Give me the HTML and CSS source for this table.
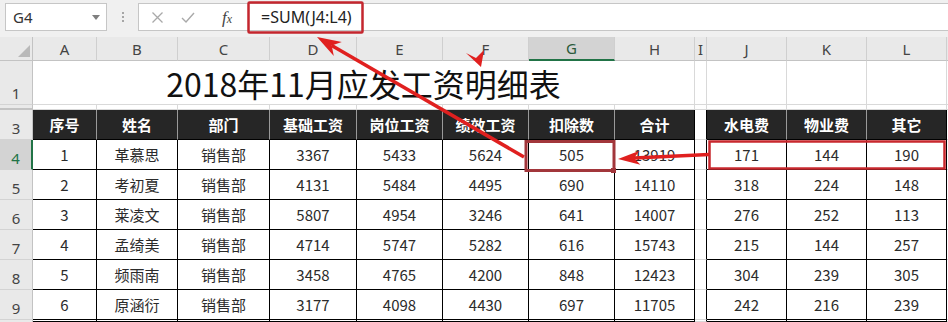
FILE: index.html
```html
<!DOCTYPE html>
<html lang="zh-CN">
<head>
<meta charset="utf-8">
<title>2018年11月应发工资明细表</title>
<link rel="stylesheet" href="styles.css">
</head>
<body>
<div class="toolbar">
  <div class="namebox"><span>G4</span><span class="dd"></span></div>
  <div class="grip"><i></i><i></i><i></i></div>
  <div class="fbar">
    <svg class="ico-x" width="13" height="13" viewBox="0 0 13 13"><path d="M1.5 1.5 L11.5 11.5 M11.5 1.5 L1.5 11.5" stroke="#a9a9a9" stroke-width="1.3" fill="none"/></svg>
    <svg class="ico-ok" width="14" height="11" viewBox="0 0 14 11"><path d="M1 6 L5 10 L13 1" stroke="#a9a9a9" stroke-width="1.4" fill="none"/></svg>
    <span class="fx">f<span class="fxx">x</span></span>
    <span class="formula">=SUM(J4:L4)</span>
  </div>
</div>

<div class="sheet">
  <!-- column headers -->
  <div class="corner"><svg width="14" height="14" viewBox="0 0 14 14"><polygon points="13,1 13,13 1,13" fill="#b9b9b9"/></svg></div>
  <div class="ch">A</div><div class="ch">B</div><div class="ch">C</div><div class="ch">D</div>
  <div class="ch">E</div><div class="ch">F</div><div class="ch sel">G</div><div class="ch">H</div>
  <div class="ch">I</div><div class="ch">J</div><div class="ch">K</div><div class="ch">L</div><div class="ch end"></div>

  <!-- row 1 -->
  <div class="rh">1</div>
  <div class="c title">2018年11月应发工资明细表</div>
  <div class="c"></div><div class="c"></div><div class="c"></div><div class="c"></div><div class="c end"></div>

  <!-- row 2 (hidden) -->
  <div class="rh hid"></div>
  <div class="c"></div><div class="c"></div><div class="c"></div><div class="c"></div><div class="c"></div><div class="c"></div>
  <div class="c"></div><div class="c"></div><div class="c"></div><div class="c"></div><div class="c"></div><div class="c"></div><div class="c end"></div>

  <!-- row 3 -->
  <div class="rh">3</div>
  <div class="th">序号</div><div class="th">姓名</div><div class="th">部门</div><div class="th">基础工资</div>
  <div class="th">岗位工资</div><div class="th">绩效工资</div><div class="th">扣除数</div><div class="th last">合计</div>
  <div class="c gap"></div>
  <div class="th">水电费</div><div class="th">物业费</div><div class="th last">其它</div><div class="c end"></div>

  <!-- row 4 -->
  <div class="rh sel">4</div>
  <div class="td">1</div><div class="td">革慕思</div><div class="td">销售部</div><div class="td">3367</div>
  <div class="td">5433</div><div class="td">5624</div><div class="td">505</div><div class="td">13919</div>
  <div class="c gap"></div>
  <div class="td">171</div><div class="td">144</div><div class="td">190</div><div class="c end"></div>

  <!-- row 5 -->
  <div class="rh">5</div>
  <div class="td">2</div><div class="td">考初夏</div><div class="td">销售部</div><div class="td">4131</div>
  <div class="td">5484</div><div class="td">4495</div><div class="td">690</div><div class="td">14110</div>
  <div class="c gap"></div>
  <div class="td">318</div><div class="td">224</div><div class="td">148</div><div class="c end"></div>

  <!-- row 6 -->
  <div class="rh">6</div>
  <div class="td">3</div><div class="td">莱凌文</div><div class="td">销售部</div><div class="td">5807</div>
  <div class="td">4954</div><div class="td">3246</div><div class="td">641</div><div class="td">14007</div>
  <div class="c gap"></div>
  <div class="td">276</div><div class="td">252</div><div class="td">113</div><div class="c end"></div>

  <!-- row 7 -->
  <div class="rh">7</div>
  <div class="td">4</div><div class="td">孟绮美</div><div class="td">销售部</div><div class="td">4714</div>
  <div class="td">5747</div><div class="td">5282</div><div class="td">616</div><div class="td">15743</div>
  <div class="c gap"></div>
  <div class="td">215</div><div class="td">144</div><div class="td">257</div><div class="c end"></div>

  <!-- row 8 -->
  <div class="rh">8</div>
  <div class="td">5</div><div class="td">频雨南</div><div class="td">销售部</div><div class="td">3458</div>
  <div class="td">4765</div><div class="td">4200</div><div class="td">848</div><div class="td">12423</div>
  <div class="c gap"></div>
  <div class="td">304</div><div class="td">239</div><div class="td">305</div><div class="c end"></div>

  <!-- row 9 -->
  <div class="rh">9</div>
  <div class="td">6</div><div class="td">原涵衍</div><div class="td">销售部</div><div class="td">3177</div>
  <div class="td">4098</div><div class="td">4430</div><div class="td">697</div><div class="td">11705</div>
  <div class="c gap"></div>
  <div class="td">242</div><div class="td">216</div><div class="td">239</div><div class="c end"></div>

  <!-- row 10 (only its top edge is visible) -->
  <div class="rh"></div>
  <div class="td"></div><div class="td"></div><div class="td"></div><div class="td"></div>
  <div class="td"></div><div class="td"></div><div class="td"></div><div class="td"></div>
  <div class="c gap"></div>
  <div class="td"></div><div class="td"></div><div class="td"></div><div class="c end"></div>
</div>

<svg class="overlay" width="948" height="322" viewBox="0 0 948 322">
  <rect x="248.5" y="2.5" width="114" height="30" rx="1" fill="none" stroke="#c4262e" stroke-width="2.5"/>
  <rect x="526" y="141.5" width="88" height="29" fill="none" stroke="#a2363b" stroke-width="3"/>
  <rect x="611" y="168" width="5" height="5" fill="#a2363b"/>
  <rect x="709.5" y="141.5" width="235" height="27" fill="none" stroke="#c8282e" stroke-width="2.5"/>
  <path d="M524 157 L331.7 45.5" stroke="#e0201f" stroke-width="3.5" fill="none"/>
  <polygon points="317,37 341.8,42.1 331.7,45.5 333.8,55.9" fill="#e0201f"/>
  <polygon points="481,67 466,53 476,58 484,50" fill="#e0201f"/>
  <path d="M709 154.5 L634 158.1" stroke="#e0201f" stroke-width="3.5" fill="none"/>
  <polygon points="618,159 639.6,150.8 634,158.1 640.4,164.8" fill="#e0201f"/>
</svg>
</body>
</html>
```

FILE: styles.css
```css
* {
  box-sizing: border-box;
  margin: 0;
  padding: 0;
}

html, body {
  width: 948px;
  height: 322px;
  overflow: hidden;
  background: #ffffff;
}

body {
  position: relative;
  font-family: "Noto Sans CJK SC", "Noto Sans", sans-serif;
}

/* ---------- formula bar ---------- */
.toolbar {
  height: 37px;
  background: #f0f0f0;
  display: flex;
  align-items: flex-start;
  padding-top: 3px;
}

.namebox {
  margin-left: 5px;
  width: 102px;
  height: 28px;
  background: #fff;
  border: 1px solid #c6c6c6;
  display: flex;
  align-items: center;
  justify-content: space-between;
  padding: 0 6px 0 7px;
  font-family: "Noto Sans", sans-serif;
  font-size: 15px;
  color: #333;
}

.dd {
  width: 0;
  height: 0;
  border-left: 4px solid transparent;
  border-right: 4px solid transparent;
  border-top: 5px solid #7f7f7f;
}

.grip {
  width: 31px;
  height: 28px;
  display: flex;
  flex-direction: column;
  align-items: center;
  justify-content: center;
  gap: 2px;
}

.grip i {
  width: 2px;
  height: 2px;
  background: #a6a6a6;
}

.fbar {
  flex: 1;
  height: 28px;
  background: #fff;
  border: 1px solid #c6c6c6;
  border-right: none;
  display: flex;
  align-items: center;
  padding-left: 12px;
}

.ico-ok {
  margin-left: 17px;
}

.fx {
  margin-left: 27px;
  font-family: "Liberation Serif", serif;
  font-style: italic;
  font-size: 17px;
  color: #444;
  line-height: 1;
}

.fxx {
  font-size: 12px;
}

.formula {
  margin-left: 29px;
  font-family: "Noto Sans", sans-serif;
  font-size: 16px;
  color: #222;
}

/* ---------- sheet grid ---------- */
.sheet {
  display: grid;
  grid-template-columns: 33px 64px 81px 92px 87px 86px 86px 86px 80px 12px 80px 80px 80px 1fr;
  grid-template-rows: 24px 44px 5px repeat(7, 30px) 2px;
  font-size: 15px;
  color: #2b2b2b;
}

.corner {
  background: #e9e9e9;
  border-right: 1px solid #c3c3c3;
  border-bottom: 1px solid #c3c3c3;
  display: flex;
  align-items: flex-end;
  justify-content: flex-end;
  padding: 0 1px 2px 0;
}

.ch {
  background: #e9e9e9;
  border-right: 1px solid #cfcfcf;
  border-bottom: 1px solid #c3c3c3;
  display: flex;
  align-items: center;
  justify-content: center;
  font-family: "Noto Sans", sans-serif;
  font-size: 15px;
  color: #444;
}

.ch.sel {
  background: #d3d3d3;
  border-bottom: 2px solid #217346;
  color: #2a5a3a;
}

.ch.end {
  border-right: none;
}

.rh {
  background: #e9e9e9;
  border-right: 1px solid #c3c3c3;
  border-bottom: 1px solid #d3d3d3;
  display: flex;
  align-items: flex-end;
  justify-content: center;
  padding-bottom: 2px;
  line-height: 18px;
  font-family: "Noto Sans", sans-serif;
  font-size: 15px;
  color: #444;
}

.rh.sel {
  background: #d3d3d3;
  border-right: 2px solid #217346;
  color: #217346;
}

.rh.hid {
  border-bottom: 2px solid #c3c3c3;
}

.c {
  border-right: 1px solid #d9d9d9;
  border-bottom: 1px solid #d9d9d9;
}

.c.end {
  border-right: none;
}

.c.gap {
  border-right: 1px solid #000;
  border-bottom: 1px solid #d9d9d9;
}

.title {
  grid-column: span 8;
  display: flex;
  align-items: center;
  justify-content: center;
  font-size: 32px;
  color: #111;
  padding-top: 1px;
}

.th {
  background: #262626;
  color: #fff;
  font-weight: 700;
  font-size: 15px;
  border-right: 1px solid #9a9a9a;
  border-bottom: 1px solid #000;
  display: flex;
  align-items: center;
  justify-content: center;
}

.th.last {
  border-right: 1px solid #000;
}

.td {
  border-right: 1px solid #000;
  border-bottom: 1px solid #000;
  display: flex;
  align-items: center;
  justify-content: center;
}

/* ---------- annotations drawn over the sheet ---------- */
.overlay {
  position: absolute;
  left: 0;
  top: 0;
  pointer-events: none;
}
```
